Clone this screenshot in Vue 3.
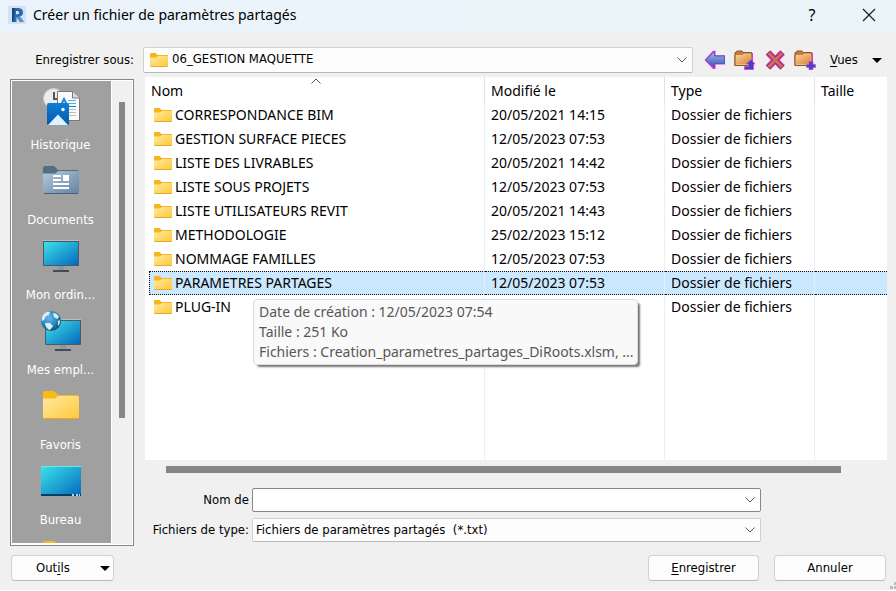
<script setup>
import { ref } from 'vue'

const location = ref('06_GESTION MAQUETTE')
const fileName = ref('')
const fileType = ref('txt')
const selected = ref('PARAMETRES PARTAGES')

const rows = [
  { name: 'CORRESPONDANCE BIM', date: '20/05/2021 14:15' },
  { name: 'GESTION SURFACE PIECES', date: '12/05/2023 07:53' },
  { name: 'LISTE DES LIVRABLES', date: '20/05/2021 14:42' },
  { name: 'LISTE SOUS PROJETS', date: '12/05/2023 07:53' },
  { name: 'LISTE UTILISATEURS REVIT', date: '20/05/2021 14:43' },
  { name: 'METHODOLOGIE', date: '25/02/2023 15:12' },
  { name: 'NOMMAGE FAMILLES', date: '12/05/2023 07:53' },
  { name: 'PARAMETRES PARTAGES', date: '12/05/2023 07:53' },
  { name: 'PLUG-IN', date: '12/05/2023 07:53' }
]

const places = [
  { icon: 'history', label: 'Historique' },
  { icon: 'documents', label: 'Documents' },
  { icon: 'computer', label: 'Mon ordin...' },
  { icon: 'network', label: 'Mes empl...' },
  { icon: 'folder', label: 'Favoris' },
  { icon: 'desktop', label: 'Bureau' },
  { icon: 'folder', label: '' }
]
</script>

<template>
  <div class="dialog">
    <svg class="defs" width="0" height="0" aria-hidden="true">
      <defs>
        <linearGradient id="gYellow" x1="0" y1="0" x2="1" y2="1">
          <stop offset="0" stop-color="#ffe9a2" /><stop offset="1" stop-color="#ffc937" />
        </linearGradient>
        <linearGradient id="gScreen" x1="0" y1="0" x2="1" y2="1">
          <stop offset="0" stop-color="#3be3ea" /><stop offset="1" stop-color="#0568bd" />
        </linearGradient>
        <linearGradient id="gDocs" x1="0" y1="0" x2="1" y2="1">
          <stop offset="0" stop-color="#b4c9df" /><stop offset="1" stop-color="#64829f" />
        </linearGradient>
        <linearGradient id="gOrange" x1="0" y1="0" x2="1" y2="1">
          <stop offset="0" stop-color="#fbd09a" /><stop offset="1" stop-color="#d88435" />
        </linearGradient>
        <linearGradient id="gBlue" x1="0" y1="0" x2="0" y2="1">
          <stop offset="0" stop-color="#a4c0f2" /><stop offset="1" stop-color="#3a4fae" />
        </linearGradient>
        <linearGradient id="gPhoto" x1="0" y1="0" x2="0" y2="1">
          <stop offset="0" stop-color="#0a80d8" /><stop offset="1" stop-color="#0757a8" />
        </linearGradient>
        <radialGradient id="gGlobe" cx="0.4" cy="0.35" r="0.7">
          <stop offset="0" stop-color="#67b9e6" /><stop offset="0.6" stop-color="#2a83bd" /><stop offset="1" stop-color="#15405f" />
        </radialGradient>
        <symbol id="smallFolder" viewBox="0 0 18 14">
          <path d="M0 1Q0 0 1 0H5.600L7.600 2H17Q18 2 18 3V6H0Z" fill="#f5b61c" />
          <path d="M0 4.500H6L8 3H17.400Q18 3 18 3.700V12.900Q18 13.500 17.200 13.500H.8Q0 13.500 0 12.900Z" fill="url(#gYellow)" />
          <path d="M.4 13.500H17.600" stroke="#e5ab2e" />
        </symbol>
        <symbol id="toolFolder" viewBox="0 0 20 20">
          <path d="M1 2.500H2L3 1H8L9 2.500H17.500V15.500H1Z" fill="#c67c38" stroke="#8e5527" />
          <path d="M1.500 5.500H8.500L10 4H17V14.500H1.500Z" fill="url(#gOrange)" stroke="#fddcb0" stroke-width="0.6" />
          <path d="M1 5V15.500H17.500" fill="none" stroke="#8e5527" />
        </symbol>
      </defs>
    </svg>

    <header class="titlebar">
      <svg class="logo" viewBox="0 0 18 18" aria-hidden="true">
        <rect width="18" height="18" fill="#d3e1f3" />
        <path d="M4 2H10.500Q15 2.300 15 6.500Q15 9.800 11.800 10.600L16 16H12L8.500 11V16H4Z" fill="#2d68b0" />
        <path d="M8 5H9.500Q11.200 5.200 11.200 6.700Q11 8.300 9.300 8.300H8Z" fill="#d3e1f3" />
        <path d="M4 2H7L5.500 15L4 16Z" fill="#174879" />
        <path d="M8.500 11L12 16H16L11.800 10.600Z" fill="#5294cc" />
      </svg>
      <h1>Créer un fichier de paramètres partagés</h1>
      <button class="caption" aria-label="Aide">?</button>
      <button class="caption" aria-label="Fermer">
        <svg width="14" height="14" viewBox="0 0 14 14"><path d="M1 1L13 13M13 1L1 13" stroke="#1b1b1b" stroke-width="1.2" /></svg>
      </button>
    </header>

    <div class="toolbar">
      <label for="loc">Enregistrer sous:</label>
      <div class="combo location">
        <svg class="loc-icon" width="18" height="14"><use href="#smallFolder" /></svg>
        <select id="loc" v-model="location"><option>06_GESTION MAQUETTE</option></select>
        <svg class="chevron" width="10" height="6" viewBox="0 0 10 6"><path d="M.5 .5L5 5L9.500 .5" /></svg>
      </div>
      <div class="tools">
        <button aria-label="Précédent">
          <svg width="22" height="20" viewBox="0 0 22 20">
            <path d="M.5 10L9 .8H11.500V5.300H21V14.500H11.500V19H9Z" fill="#ee2be8" />
            <path d="M1.500 9.700L10.500 1.500V6H20.500V13.500H10.500V17.500Z" fill="url(#gBlue)" stroke="#4a60b4" />
          </svg>
        </button>
        <button aria-label="Dossier parent">
          <svg width="22" height="20" viewBox="0 0 22 20">
            <use href="#toolFolder" width="20" height="20" />
            <path d="M18.500 3V12" stroke="#ee2be8" />
            <path d="M10.500 19.500V16.500H14.500V14H12.500L17 9.500L21 14H19.500V19.500Z" fill="#3b48bd" stroke="#ee2be8" stroke-width="0.7" />
          </svg>
        </button>
        <button aria-label="Supprimer">
          <svg width="22" height="20" viewBox="0 0 22 20">
            <path d="M4 2.500L18.500 17.500M18.500 2.500L4 17.500" stroke="#ee2be8" stroke-width="6.600" />
            <path d="M4 2.500L18.500 17.500M18.500 2.500L4 17.500" stroke="#963b43" stroke-width="4.800" />
            <path d="M4.500 3L18 17M18 3L4.500 17" stroke="#cf6d68" stroke-width="2.800" />
          </svg>
        </button>
        <button aria-label="Nouveau dossier">
          <svg width="22" height="20" viewBox="0 0 22 20">
            <use href="#toolFolder" width="20" height="20" />
            <path d="M18.500 3V12" stroke="#ee2be8" />
            <path d="M15 11.500H19V14.500H21.500V17.500H19V19.700H15V17.500H12.500V14.500H15Z" fill="#3d4dbe" stroke="#ee2be8" stroke-width="0.6" />
          </svg>
        </button>
      </div>
      <button class="views"><span><u>V</u>ues</span><i class="tri"></i></button>
    </div>

    <main class="body">
      <nav class="places" aria-label="Emplacements">
        <ul>
          <li v-for="(p, i) in places" :key="i">
            <button :aria-label="p.label || 'Dossier'">
              <svg width="47" height="48" viewBox="1 0 47 48" aria-hidden="true">
                <g v-if="p.icon === 'history'">
                  <circle cx="17.500" cy="16.500" r="10" fill="#ececec" stroke="#c9c9c9" />
                  <path d="M18 10V17H23" fill="none" stroke="#555" stroke-width="2" />
                  <path d="M21.500 9.500H36.500L43.500 16V38.500H21.500Z" fill="#fafafa" stroke="#777" />
                  <path d="M36.500 9.500V16H43.500" fill="#ddd" stroke="#777" />
                  <path d="M25 23L28 17L31 23" fill="none" stroke="#2a83cf" stroke-width="2" />
                  <path d="M32 18.500H40M32 21.500H40" stroke="#39bdf0" />
                  <path d="M33 24.500H40" stroke="#1877cf" />
                  <path d="M33 27.500H40M33 30.500H40M33 33.500H40" stroke="#b8b8b8" />
                  <rect x="11" y="21" width="22" height="22" rx="1.500" fill="url(#gPhoto)" />
                  <path d="M12 43L22 32.500L32 43Z" fill="#dff2ff" />
                  <circle cx="27" cy="27.500" r="1.700" fill="#fff" />
                </g>
                <g v-else-if="p.icon === 'documents'">
                  <path d="M7 11Q7 9 9 9H18L22 13H41Q43 13 43 15V35H7Z" fill="#526f7d" />
                  <path d="M7 16.500H19L22.500 14H42Q43 14 43 15V35Q43 37 41 37H9Q7 37 7 35Z" fill="url(#gDocs)" />
                  <path d="M8 36.500H42" stroke="#43607c" />
                  <path d="M17 19H25M17 23H25M17 27H33M17 31H33" stroke="#fff" stroke-width="2" />
                  <rect x="27" y="18" width="6" height="6" fill="#fff" />
                </g>
                <g v-else-if="p.icon === 'computer'">
                  <rect x="7" y="8" width="36" height="26" rx="1" fill="#4b5a66" />
                  <path d="M7 8.500H43" stroke="#aebfc7" />
                  <rect x="8" y="10" width="34" height="23" fill="url(#gScreen)" />
                  <rect x="22" y="34" width="6" height="4" fill="#8a97a5" />
                  <rect x="17" y="38" width="16" height="2" fill="#454a58" />
                </g>
                <g v-else-if="p.icon === 'network'">
                  <rect x="9" y="12" width="36" height="26" rx="1" fill="#4b5a66" />
                  <path d="M9 12.500H45" stroke="#aebfc7" />
                  <rect x="10" y="14" width="34" height="23" fill="url(#gScreen)" />
                  <rect x="24" y="38" width="6" height="4" fill="#8a97a5" />
                  <rect x="19" y="42" width="16" height="2" fill="#454a58" />
                  <circle cx="15" cy="14" r="10" fill="url(#gGlobe)" />
                  <path d="M7 8Q10 4 14 5L13 8L10 9L8 13L6 14Q5 11 7 8ZM17 6Q21 6 23 10L21 12L18 10ZM9 16L14 16L17 19L14 23Q10 22 9 16ZM22 14L24 13Q24 17 22 19Z" fill="#d9eef5" />
                </g>
                <g v-else-if="p.icon === 'folder'">
                  <path d="M7 11Q7 9 9 9H18L22 13H41Q43 13 43 15V35H7Z" fill="#fbb917" />
                  <path d="M7 16.500H19L22.500 14H42Q43 14 43 15.500V35Q43 37 41 37H9Q7 37 7 35Z" fill="url(#gYellow)" />
                  <path d="M8 36.500H42" stroke="#e8a620" />
                </g>
                <g v-else>
                  <rect x="5" y="9" width="40" height="30" rx="1" fill="url(#gScreen)" />
                  <path d="M5 9.500H45" stroke="#69e7ee" />
                  <rect x="5" y="37" width="40" height="2" fill="#073c63" />
                  <path d="M36 38H38M40 38H42M43 38H44" stroke="#b5d6ec" stroke-width="2" />
                </g>
              </svg>
              <span>{{ p.label }}</span>
            </button>
          </li>
        </ul>
        <div class="vtrack"><div class="vthumb"></div></div>
      </nav>

      <section class="content">
        <div class="list">
          <table>
            <colgroup><col class="c1" /><col class="c2" /><col class="c3" /><col /></colgroup>
            <thead>
              <tr>
                <th>Nom<svg class="sort" width="10" height="6" viewBox="0 0 10 6"><path d="M.5 5.500L5 1L9.500 5.500" /></svg></th>
                <th>Modifié le</th>
                <th>Type</th>
                <th>Taille</th>
              </tr>
            </thead>
            <tbody>
              <tr v-for="r in rows" :key="r.name" :class="{ selected: r.name === selected }" @click="selected = r.name">
                <td><span class="name"><svg width="18" height="14"><use href="#smallFolder" /></svg>{{ r.name }}</span></td>
                <td>{{ r.date }}</td>
                <td>Dossier de fichiers</td>
                <td></td>
              </tr>
              <tr class="filler"><td></td><td></td><td></td><td></td></tr>
            </tbody>
          </table>
          <div class="tooltip" role="tooltip">
            <p>Date de création : 12/05/2023 07:54</p>
            <p>Taille : 251 Ko</p>
            <p>Fichiers : Creation_parametres_partages_DiRoots.xlsm, ...</p>
          </div>
        </div>
        <div class="htrack"><div class="hthumb"></div></div>
        <form class="fields" @submit.prevent>
          <label for="fname">Nom de</label>
          <div class="combo strong">
            <input id="fname" v-model="fileName" type="text" />
            <svg class="chevron" width="10" height="6" viewBox="0 0 10 6"><path d="M.5 .5L5 5L9.500 .5" /></svg>
          </div>
          <label for="ftype">Fichiers de type:</label>
          <div class="combo">
            <select id="ftype" v-model="fileType"><option value="txt">Fichiers de paramètres partagés&nbsp; (*.txt)</option></select>
            <svg class="chevron" width="10" height="6" viewBox="0 0 10 6"><path d="M.5 .5L5 5L9.500 .5" /></svg>
          </div>
        </form>
      </section>
    </main>

    <footer class="actions">
      <button class="btn menu"><span>Out<u>i</u>ls</span><i class="tri"></i></button>
      <button class="btn save"><span><u>E</u>nregistrer</span></button>
      <button class="btn">Annuler</button>
      <svg class="grip" width="6" height="8" viewBox="0 0 6 8"><path d="M4 0H6V3H4ZM0 4H3V7H0ZM4 4H6V7H4Z" fill="#bcbcbc" /></svg>
    </footer>
  </div>
</template>

<style>
body {
  margin: 0;
  background: #f0f0f0;
}
</style>

<style scoped>
* {
  box-sizing: border-box;
}
.dialog {
  display: flex;
  flex-direction: column;
  min-height: 100vh;
  background: #f0f0f0;
  border-bottom: 1px solid #fafafa;
  color: #000;
  font: 13px/16px "DejaVu Sans Condensed", "Noto Sans", sans-serif;
}
.defs {
  position: absolute;
}
button {
  padding: 0;
  border: 0;
  background: none;
  color: inherit;
  font: inherit;
}
u {
  text-underline-offset: 2px;
}
.titlebar {
  display: flex;
  align-items: center;
  height: 33px;
  padding: 0 6px 4px 8px;
  background: linear-gradient(90deg, #eaf3fb, #eaf5f8);
  font-family: "Noto Sans", sans-serif;
}
.logo {
  width: 18px;
  height: 18px;
  margin-right: 7px;
}
h1 {
  flex: 1;
  margin: 0;
  font-size: 14px;
  font-weight: 400;
  line-height: 20px;
}
.caption {
  display: grid;
  place-items: center;
  width: 42px;
  height: 24px;
  margin-left: 15px;
  font-size: 16px;
}
.toolbar {
  display: flex;
  align-items: center;
  height: 44px;
  padding: 10px 14px 0 0;
}
.toolbar > label {
  width: 143px;
  padding-right: 9px;
  text-align: right;
}
.combo {
  position: relative;
  display: flex;
  height: 24px;
  border: 1px solid #d0d0d0;
  border-bottom-color: #b8b8b8;
  border-radius: 2px;
  background: #fdfdfd;
}
.combo.strong {
  border-color: #868686;
  background: #fff;
}
.combo select,
.combo input {
  flex: 1;
  min-width: 0;
  padding: 0 24px 0 3px;
  border: 0;
  outline: 0;
  appearance: none;
  background: transparent;
  color: inherit;
  font: inherit;
}
.combo.location {
  flex: 1;
  align-self: flex-start;
  height: 26px;
  margin-top: 4px;
}
.location select {
  padding: 0 24px 2px 28px;
}
.loc-icon {
  position: absolute;
  top: 5px;
  left: 6px;
}
.chevron {
  position: absolute;
  top: 50%;
  right: 5px;
  margin-top: -3px;
  pointer-events: none;
}
.chevron path,
.sort path {
  fill: none;
  stroke: #555;
}
.tools {
  display: flex;
  gap: 8px;
  margin-left: 11px;
}
.tools button {
  display: grid;
  width: 22px;
  height: 20px;
}
.views {
  display: flex;
  align-items: center;
  justify-content: space-between;
  width: 52px;
  margin-left: 14px;
}
.tri {
  border: 5px solid transparent;
  border-top-color: #000;
  border-bottom: 0;
}
.body {
  display: flex;
  flex: 1;
  gap: 11px;
  padding: 0 9px 0 10px;
}
.places {
  display: flex;
  flex: none;
  width: 124px;
  height: 467px;
  margin-top: 2px;
  padding: 1px;
  border: 1px solid #828790;
  background: #fff;
}
.places ul {
  flex: 1;
  margin: 0 1px 1px 0;
  padding: 1px 0 0;
  overflow: hidden;
  list-style: none;
  background: #a0a0a0;
}
.places button {
  display: flex;
  flex-direction: column;
  align-items: center;
  gap: 7px;
  width: 100%;
  height: 75px;
  padding-right: 2px;
  color: #fff;
  line-height: 16px;
}
.places svg {
  flex: none;
  overflow: visible;
}
.vtrack {
  width: 20px;
  padding: 21px 7px 126px;
  background: #f0f0f0;
}
.vthumb {
  height: 100%;
  background: #868686;
}
.content {
  display: flex;
  flex: 1;
  flex-direction: column;
  min-width: 0;
}
.list {
  position: relative;
  flex: 1;
  display: flex;
  padding-left: 4px;
  background: #fff;
}
table {
  width: 100%;
  border-collapse: separate;
  border-spacing: 0;
  table-layout: fixed;
  font: 14px/20px "Noto Sans", sans-serif;
}
.c1 {
  width: 336px;
}
.c2 {
  width: 180px;
}
.c3 {
  width: 150px;
}
th,
td {
  height: 24px;
  padding: 0 6px;
  overflow: hidden;
  border-right: 1px solid #e5f0fb;
  font-weight: 400;
  text-align: left;
  white-space: nowrap;
}
th {
  position: relative;
  height: 26px;
  padding-top: 2px;
  border-color: #e2e2e2;
}
th:first-child {
  padding-left: 2px;
}
th:last-child,
td:last-child {
  border-right: 0;
}
td:first-child {
  padding-left: 5px;
}
.sort {
  position: absolute;
  top: 1px;
  left: 50%;
  margin-left: -6px;
}
.name {
  display: flex;
  align-items: center;
  gap: 3px;
}
.selected td {
  border-top: 1px dotted #111;
  border-bottom: 1px dotted #111;
  background: #cce8ff;
}
.selected td:first-child {
  padding-left: 4px;
  border-left: 1px dotted #111;
}
.filler td {
  height: auto;
}
.tooltip {
  position: absolute;
  top: 222px;
  left: 108px;
  padding: 2px 3px 2px 5px;
  border: 1px solid #dcdcdc;
  border-radius: 4px;
  background: #f9f9f9;
  box-shadow: 3px 3px 2px -1px #777;
  color: #575757;
  font: 14px/20px "Noto Sans", sans-serif;
  white-space: nowrap;
}
.tooltip p {
  margin: 0;
}
.htrack {
  height: 19px;
  padding: 6px 46px 6px 21px;
}
.hthumb {
  height: 100%;
  background: #868686;
}
.fields {
  display: grid;
  grid-template-columns: 104px minmax(0, 509px);
  gap: 6px 3px;
  align-items: center;
  padding: 9px 0 4px;
}
.fields label {
  text-align: right;
  white-space: nowrap;
}
.actions {
  display: flex;
  align-items: flex-start;
  gap: 15px;
  height: 44px;
  padding: 9px 0 0 11px;
}
.btn {
  width: 112px;
  height: 26px;
  border: 1px solid #d0d0d0;
  border-bottom-color: #b8b8b8;
  border-radius: 4px;
  background: #fdfdfd;
}
.menu {
  display: flex;
  align-items: center;
  justify-content: space-between;
  width: 103px;
  padding: 0 3px 0 24px;
}
.save {
  width: 111px;
  margin-left: auto;
}
.grip {
  align-self: flex-end;
  margin-left: -11px;
}
</style>
